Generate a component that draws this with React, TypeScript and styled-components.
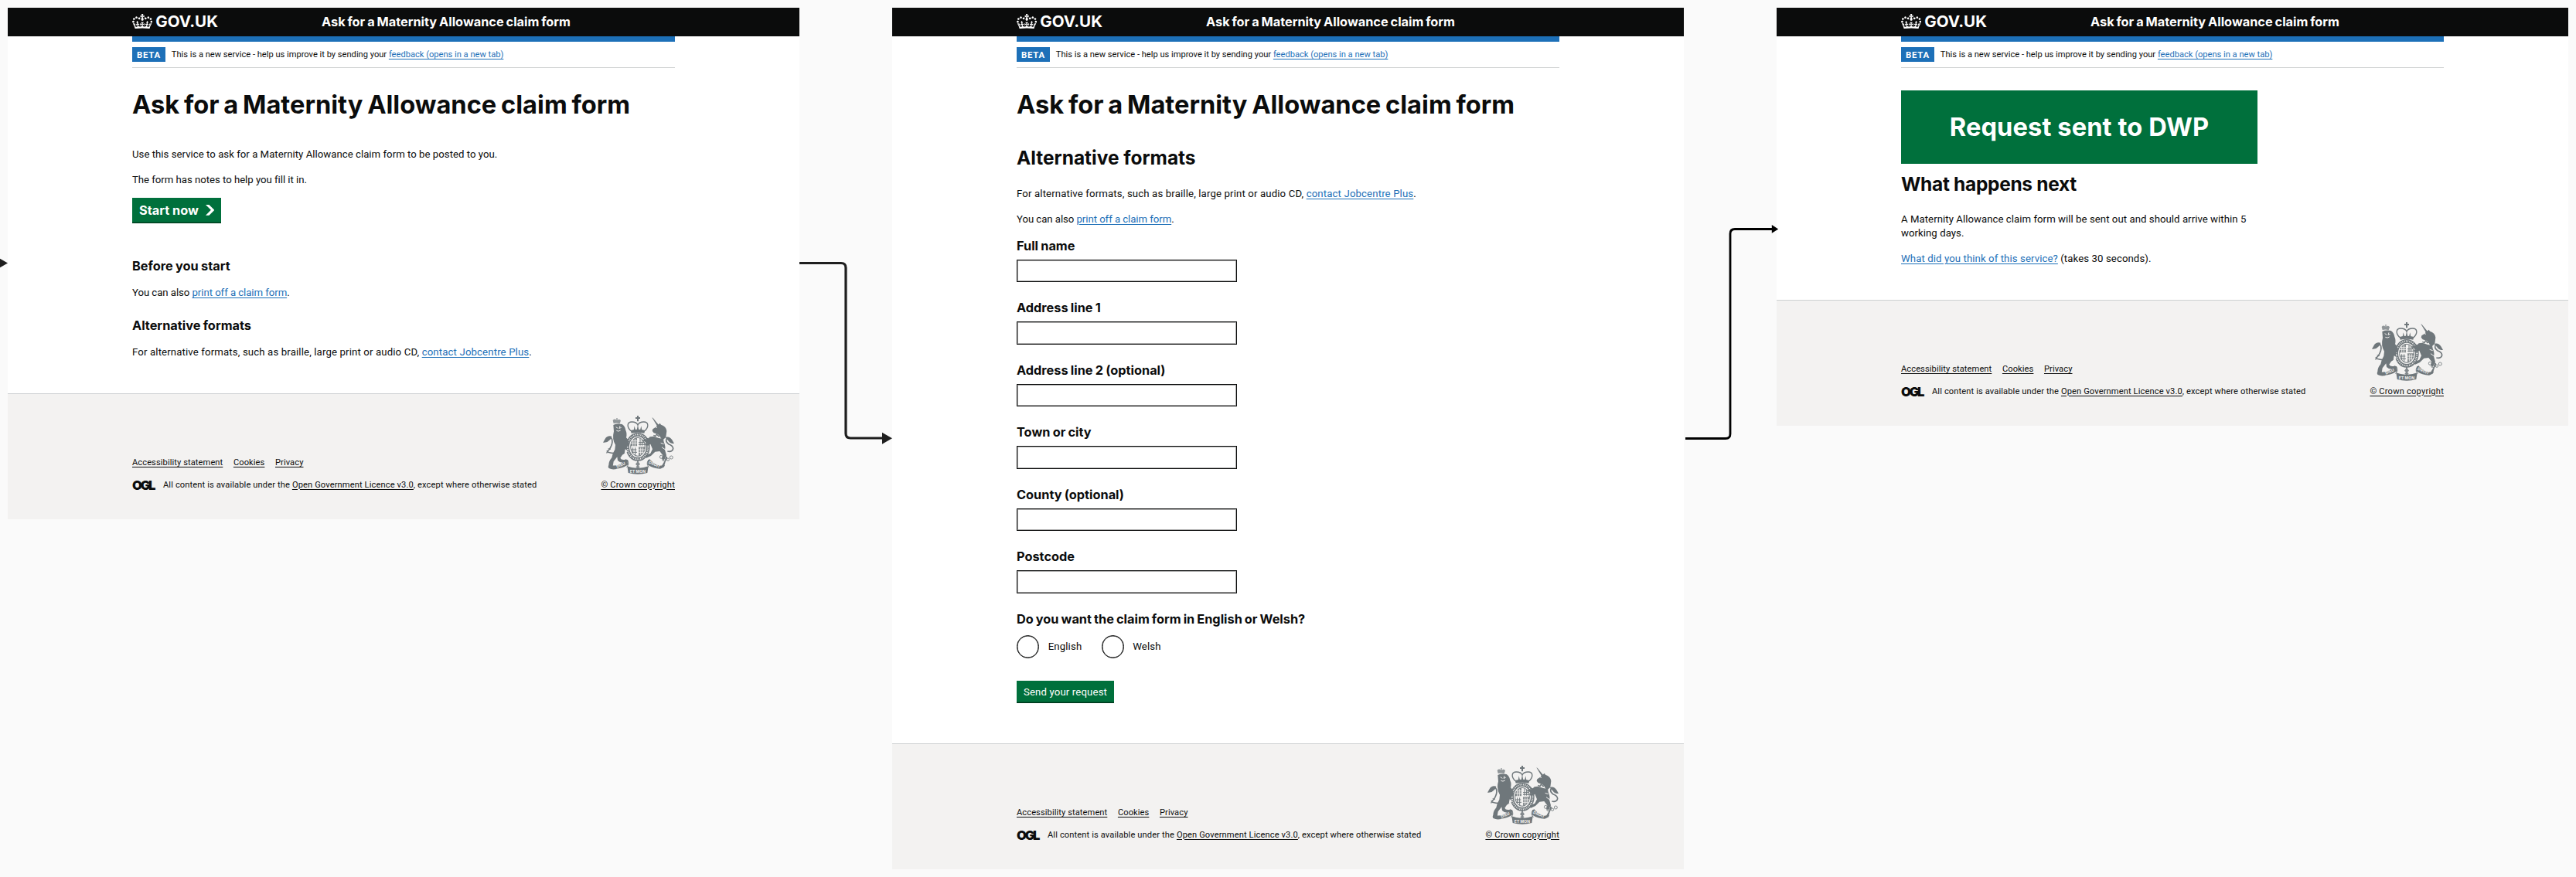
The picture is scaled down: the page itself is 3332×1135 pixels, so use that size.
import React from "react";
import styled, { createGlobalStyle } from "styled-components";

const INK = "#0b0c0c";
const LINK = "#1d70b8";
const GREEN = "#00703c";
const CREST = "#6f777b";
const FOOTER_BG = "#f3f2f1";

const BODY_FONT = `Roboto, "Liberation Sans", Arial, sans-serif`;
const DISPLAY_FONT = `Inter, "Liberation Sans", Arial, sans-serif`;

const GlobalStyle = createGlobalStyle`
  *, *::before, *::after { box-sizing: border-box; }
  body {
    margin: 0;
    background: #fafafa;
    color: ${INK};
    font-family: ${BODY_FONT};
    -webkit-font-smoothing: antialiased;
  }
  h1, h2, h3, p, fieldset, legend { margin: 0; padding: 0; border: 0; font-weight: inherit; }
`;

/* ---------- Board ---------- */

const Board = styled.div`
  position: relative;
  display: flex;
  align-items: flex-start;
  gap: 120px;
  width: 3332px;
  height: 1135px;
  padding: 10px;
  overflow: hidden;
`;

const Connectors = styled.svg`
  position: absolute;
  inset: 0;
  pointer-events: none;
`;

const Screen = styled.section<{ $height: number }>`
  flex: none;
  display: flex;
  flex-direction: column;
  width: 1024px;
  height: ${(p) => p.$height}px;
  background: #fff;
`;

const Container = styled.div`
  width: 702px;
  margin: 0 auto;
`;

/* ---------- Header ---------- */

const HeaderBar = styled.header`
  flex: none;
  background: ${INK};
  height: 36.6px;
`;

const HeaderInner = styled(Container)`
  display: flex;
  align-items: center;
  height: 100%;
  color: #fff;
`;

const Brand = styled.div`
  display: flex;
  align-items: center;
  gap: 4px;
  width: 245px;
  font-family: ${DISPLAY_FONT};
  font-size: 20.6px;
  font-weight: 700;
  line-height: 22px;

  svg {
    margin-top: -2px;
  }
`;

const ServiceName = styled.div`
  font-family: ${DISPLAY_FONT};
  font-size: 16.32px;
  font-weight: 700;
  line-height: 22px;
  word-spacing: -0.06em;
  white-space: nowrap;
`;

const BlueBar = styled(Container)`
  flex: none;
  height: 7.3px;
  background: ${LINK};
`;

const PhaseBanner = styled(Container)`
  flex: none;
  display: flex;
  align-items: center;
  gap: 8px;
  height: 34.1px;
  border-bottom: 1px solid #cfd1d2;
`;

const PhaseTag = styled.strong`
  display: flex;
  align-items: center;
  justify-content: center;
  width: 42.8px;
  height: 18.6px;
  padding-top: 1px;
  background: ${LINK};
  color: #fff;
  font-size: 11.4px;
  font-weight: 700;
  letter-spacing: 0.06em;
  line-height: 18px;
`;

const PhaseText = styled.span`
  padding-top: 1.4px;
  font-size: 11.12px;
  line-height: 14px;
  white-space: nowrap;
`;

const Link = styled.a<{ $dark?: boolean }>`
  color: ${(p) => (p.$dark ? INK : LINK)};
  text-decoration: underline;
  text-decoration-thickness: 1px;
  text-underline-offset: 1.5px;
  cursor: pointer;
`;

/* ---------- Content ---------- */

const Main = styled.main`
  flex: 1;
  width: 702px;
  margin: 0 auto;
`;

const Title = styled.h1`
  padding-top: 28.8px;
  font-family: ${DISPLAY_FONT};
  font-size: 32.64px;
  font-weight: 700;
  line-height: 36.6px;
  word-spacing: -0.06em;
  white-space: nowrap;
`;

const Heading = styled.h2<{ $gap: number; $tracking?: number }>`
  margin-top: ${(p) => p.$gap}px;
  font-family: ${DISPLAY_FONT};
  font-size: 24.46px;
  font-weight: 700;
  line-height: 28px;
  letter-spacing: ${(p) => p.$tracking ?? 0}em;
`;

const Subheading = styled.h3<{ $gap: number }>`
  margin-top: ${(p) => p.$gap}px;
  font-family: ${DISPLAY_FONT};
  font-size: 16.32px;
  font-weight: 700;
  line-height: 22px;
  word-spacing: -0.03em;
`;

const Text = styled.p<{ $gap: number; $wrap?: boolean; $tracking?: number }>`
  margin-top: ${(p) => p.$gap}px;
  margin-bottom: -0.6px;
  padding-top: 0.6px;
  font-size: 13.2px;
  line-height: 18.4px;
  letter-spacing: ${(p) => p.$tracking ?? 0.005}em;
  width: ${(p) => (p.$wrap ? "461px" : "auto")};
  white-space: ${(p) => (p.$wrap ? "normal" : "nowrap")};
`;

const StartButton = styled.button`
  display: flex;
  align-items: center;
  gap: 9px;
  width: 115px;
  height: 32.6px;
  margin: 14.4px 0 0;
  padding: 0 0 1.5px 9px;
  border: 0;
  background: ${GREEN};
  box-shadow: inset 0 -1.5px 0 #00401f;
  color: #fff;
  font: 700 16.32px/22px ${DISPLAY_FONT};
  white-space: nowrap;
`;

const SendButton = styled.button`
  display: flex;
  align-items: center;
  justify-content: center;
  width: 126px;
  height: 29.4px;
  margin: 29.3px 0 0;
  padding: 0;
  border: 0;
  background: ${GREEN};
  box-shadow: inset 0 -1.5px 0 #00381c;
  color: #fff;
  font: 400 13.2px/18px ${BODY_FONT};
  letter-spacing: 0.011em;
  white-space: nowrap;
`;

const Fields = styled.div`
  display: grid;
  grid-auto-rows: 80.5px;
  margin-top: 13.6px;
`;

const Field = styled.label`
  display: flex;
  flex-direction: column;
  gap: 7.4px;
  font-family: ${DISPLAY_FONT};
  font-size: 16.32px;
  font-weight: 700;
  line-height: 22px;
  word-spacing: -0.04em;
`;

const Input = styled.input`
  width: 284.5px;
  height: 29.3px;
  margin: 0;
  padding: 0 4px;
  border: 1px solid ${INK};
  border-radius: 0;
  box-shadow: inset 0 0 0 1px rgba(11, 12, 12, 0.35);
  background: #fff;
  font: inherit;
`;

const Question = styled.legend`
  font-family: ${DISPLAY_FONT};
  font-size: 16.32px;
  font-weight: 700;
  line-height: 22px;
  word-spacing: -0.05em;
  white-space: nowrap;
`;

const Radios = styled.div`
  display: flex;
  margin-top: 10.9px;
`;

const RadioLabel = styled.label`
  display: flex;
  align-items: center;
  gap: 11.4px;
  width: 109.5px;
  font-size: 13.2px;
  line-height: 19.6px;
  letter-spacing: 0.01em;
`;

const RadioCircle = styled.span`
  flex: none;
  width: 29.3px;
  height: 29.3px;
  border: 1px solid ${INK};
  border-radius: 50%;
  box-shadow: inset 0 0 0 0.5px ${INK};
`;

const Confirmation = styled.div`
  display: flex;
  align-items: center;
  justify-content: center;
  width: 461px;
  height: 95px;
  margin-top: 28.7px;
  background: ${GREEN};
  color: #fff;
  font-family: ${DISPLAY_FONT};
  font-size: 32.64px;
  font-weight: 700;
  line-height: 36.6px;
  letter-spacing: 0.003em;
  white-space: nowrap;
`;

/* ---------- Footer ---------- */

const FooterBar = styled.footer`
  flex: none;
  height: 163.5px;
  border-top: 1px solid #cdd0d2;
  background: ${FOOTER_BG};
  font-size: 11.12px;
  line-height: 14px;
`;

const FooterInner = styled(Container)`
  display: flex;
  align-items: flex-end;
  justify-content: space-between;
  height: 125px;
`;

const FooterMeta = styled.div`
  display: flex;
  flex-direction: column;
  gap: 14.3px;
`;

const FooterLinks = styled.nav`
  display: flex;
  gap: 13.6px;
  letter-spacing: 0.008em;
`;

const Licence = styled.div`
  display: flex;
  align-items: center;
  gap: 10px;
  height: 14px;
  white-space: nowrap;
  letter-spacing: 0.011em;
`;

const Ogl = styled.span`
  width: 30px;
  color: ${INK};
  font-family: ${DISPLAY_FONT};
  font-size: 16.6px;
  font-weight: 900;
  letter-spacing: -0.13em;
  line-height: 14px;
`;

const Copyright = styled.div`
  display: flex;
  flex-direction: column;
  align-items: flex-end;
  gap: 6.6px;
  white-space: nowrap;
  letter-spacing: 0.019em;

  svg {
    margin-right: 1px;
  }
`;

/* ---------- Drawings ---------- */

const Crown = () => (
  <svg width="26.3" height="19.3" viewBox="0 0 132 97" fill="currentColor" aria-hidden="true">
    <path d="M25 30.2c3.5 1.5 7.7-.2 9.1-3.7 1.5-3.6-.2-7.8-3.9-9.2-3.6-1.4-7.6.3-9.1 3.9-1.4 3.5.3 7.5 3.9 9zM9 39.5c3.6 1.5 7.8-.2 9.2-3.7 1.5-3.6-.2-7.8-3.9-9.1-3.6-1.5-7.6.2-9.1 3.8-1.4 3.5.3 7.5 3.8 9zM4.4 57.2c3.5 1.5 7.7-.2 9.1-3.8 1.5-3.6-.2-7.7-3.9-9.1-3.5-1.5-7.6.3-9.1 3.8-1.4 3.5.3 7.6 3.9 9.1zm38.3-21.4c3.5 1.5 7.7-.2 9.1-3.8 1.5-3.6-.2-7.7-3.9-9.1-3.6-1.5-7.6.3-9.1 3.8-1.3 3.6.4 7.7 3.9 9.1zm64.4-5.6c-3.6 1.5-7.8-.2-9.1-3.7-1.5-3.6.2-7.8 3.8-9.2 3.6-1.4 7.7.3 9.2 3.9 1.3 3.5-.4 7.5-3.9 9zm15.9 9.3c-3.6 1.5-7.7-.2-9.1-3.7-1.5-3.6.2-7.8 3.7-9.1 3.6-1.5 7.7.2 9.2 3.8 1.5 3.5-.3 7.5-3.8 9zm4.7 17.7c-3.6 1.5-7.8-.2-9.2-3.8-1.5-3.6.2-7.7 3.9-9.1 3.6-1.5 7.7.3 9.2 3.8 1.3 3.5-.4 7.6-3.9 9.1zM89.3 35.8c-3.6 1.5-7.8-.2-9.2-3.8-1.4-3.6.2-7.7 3.9-9.1 3.6-1.5 7.7.3 9.2 3.8 1.4 3.6-.3 7.7-3.9 9.1zM69.7 17.7l8.9 4.7V9.3l-8.9 2.8c-.2-.3-.5-.6-.9-.9L72.4 0H59.6l3.5 11.2c-.3.3-.6.5-.9.9l-8.8-2.8v13.1l8.8-4.7c.3.3.6.7.9.9l-5 15.4v.1c-.2.8-.4 1.6-.4 2.4 0 4.1 3.1 7.5 7 8.1h.2c.3 0 .7.1 1 .1.4 0 .7 0 1-.1h.2c4-.6 7.1-4.1 7.1-8.1 0-.8-.1-1.7-.4-2.4V34l-5.1-15.4c.4-.2.7-.6 1-.9zM66 92.8c16.9 0 32.8 1.1 47.1 3.2 4-16.9 8.9-26.7 14-33.5l-9.6-3.4c1 4.9 1.1 7.2 0 10.2-1.5-1.4-3-4.3-4.2-8.7L108.6 76c2.8-2 5-3.2 7.5-3.3-4.4 9.4-10 11.9-13.6 11.2-4.3-.8-6.3-4.6-5.6-7.9 1-4.7 5.7-5.9 8-.5 4.3-8.7-3-11.4-7.6-8.8 7.1-7.2 7.9-13.5 2.1-21.1-8 6.1-8.1 12.3-4.5 20.8-4.7-5.4-12.1-2.5-9.5 6.2 3.4-5.2 7.9-2 7.2 3.1-.6 4.3-6.4 7.8-13.5 7.2-10.3-.9-10.9-8-11.2-13.8 2.5-.5 7.1 1.8 11 7.3L80.2 60c-4.1 4.4-8 5.3-12.3 5.4 1.4-4.4 8-11.6 8-11.6H55.5s6.4 7.2 7.9 11.6c-4.2-.1-8-1-12.3-5.4l1.4 16.4c3.9-5.5 8.5-7.7 10.9-7.3-.3 5.8-.9 12.8-11.1 13.8-7.2.6-12.9-2.9-13.5-7.2-.7-5 3.8-8.3 7.1-3.1 2.7-8.7-4.6-11.6-9.4-6.2 3.7-8.5 3.6-14.7-4.6-20.8-5.8 7.6-5 13.9 2.2 21.1-4.7-2.6-11.9.1-7.7 8.8 2.3-5.5 7.1-4.2 8.1.5.7 3.3-1.3 7.1-5.7 7.9-3.5.7-9-1.8-13.5-11.2 2.5.1 4.7 1.3 7.5 3.3l-4.7-15.4c-1.2 4.4-2.7 7.2-4.3 8.7-1.1-3-.9-5.3 0-10.2l-9.5 3.4c5 6.9 9.9 16.7 14 33.5 14.8-2.1 30.8-3.2 47.7-3.2z" />
  </svg>
);

const Crest = () => (
  <svg width="92" height="76" viewBox="0 0 276 228" fill={CREST} aria-hidden="true">
    {/* royal crown */}
    <path d="M132 0h6v6h6v6h-6v10h-6V12h-6V6h6z" />
    <g fill="none" stroke={CREST} strokeWidth="4">
      <path d="M108 59C92 44 92 24 112 24c12 0 20 5 23 12 3-7 11-12 23-12 20 0 20 20 4 35" />
    </g>
    <path d="M119 56l3-16 4 16zM131 56l4-22 4 22zM144 56l4-16 3 16z" />
    <path d="M107 57q28-7 56 0l-3 11q-25-5-50 0z" />
    {/* garter and shield */}
    <ellipse cx="135" cy="121" rx="40" ry="48" fill="none" stroke={CREST} strokeWidth="14" />
    <ellipse cx="135" cy="121" rx="40" ry="48" fill="none" stroke={FOOTER_BG} strokeWidth="6" strokeDasharray="3 4" />
    <ellipse cx="135" cy="121" rx="28" ry="36" fill="none" stroke={CREST} strokeWidth="3" />
    <path d="M110 100q10-14 22-14v32h-25zM138 121h26q-3 30-26 35z" opacity="0.8" />
    <path d="M116 94v24M124 90v28M108 106h24M110 98h22M146 124v28M154 124v22M138 132h24M138 142h20" stroke={FOOTER_BG} strokeWidth="2.5" />
    <path d="M144 88v28M152 92v24M138 104h24M138 112h26M116 124v22M125 124v30M108 132h22M112 142h20" fill="none" stroke={CREST} strokeWidth="3" />
    {/* lion crown */}
    <path d="M41 30l-3-12q7-8 14-1V9h4v8q8-7 13 2l-4 12q-12-5-24-1z" opacity="0.75" />
    {/* lion */}
    <path d="M40 36q14-7 34-3 12 8 14 24 6 12 2 28 8 6 10 18l2 12-9 3-2 24-16 10-8 12q4 10 20 6l12 4-6 5q-24 8-36-5l-2-14-14 18-3 18 12 6 3 5q-18 4-30-3-5-4-1-13 0-14 12-28 2-16 12-32l2-18q-14-22-6-52z" />
    <path d="M50 44l8 5M66 40l-3 9 8-3M52 58q8 5 16-1" stroke={FOOTER_BG} strokeWidth="3" fill="none" />
    <path d="M86 130q8 3 9 10l-12 8z" fill={FOOTER_BG} />
    {/* lion tail */}
    <path d="M44 146q-26-2-28-8 10-4 18-26 6-26-8-28" fill="none" stroke={CREST} strokeWidth="5" />
    <path d="M34 80q-18-4-26 10l-8 14q16 2 24-8 8-6 10-16z" />
    <path d="M24 142l-12 2M30 130l-10-2" stroke={CREST} strokeWidth="3" />
    {/* unicorn */}
    <path d="M190 7l4 2 24 29-7 4z" />
    <path d="M216 34l5-5 4 6q20 6 22 24l-3 24-14 14-9-18-10-8-14-4-6-8 2-7 12-8q4-8 11-10z" />
    <path d="M204 44l6 2" stroke={FOOTER_BG} strokeWidth="3" />
    <path d="M196 76l8 4 4-8 8 8 6-4 4 10 8 0" fill="none" stroke={CREST} strokeWidth="4" />
    <path d="M182 82l14-2q20 8 38 10l2 12q8 18 4 30l6 22-10 20-8-8 4-12-12-16-18 2-16 16-18 8-6-4 8-8 14-6 8-16-8-20-16 8-6-10 14-4-18-4-4-6 16-2-6-8 12 4z" />
    <path d="M244 156l-4 18-12 20 8 6 6-20 8-18z" />
    <path d="M242 132l-14-10M236 110l-12-4" stroke={FOOTER_BG} strokeWidth="3" />
    {/* unicorn tail */}
    <path d="M250 138q20 4 22-10 0-12-18-18-16-12-4-26" fill="none" stroke={CREST} strokeWidth="5" />
    <path d="M242 84q16-6 26 10l8 14q-16 0-22-10-6-6-12-14z" />
    {/* chain */}
    <g fill="none" stroke={CREST} strokeWidth="2.5">
      <circle cx="226" cy="160" r="6" />
      <circle cx="236" cy="170" r="6" />
      <circle cx="252" cy="170" r="5" />
      <circle cx="265" cy="162" r="6" />
    </g>
    {/* thistle and rose */}
    <path d="M132 174h6v6l6 8-6 6 5 6-8 6-8-6 5-6-6-6 6-8z" opacity="0.85" />
    {/* motto ribbons */}
    <path d="M30 192q30 8 58-22l8 2q-2 12 2 18-24 16-50 16-16-4-18-14z" />
    <path d="M240 192q-30 8-58-22l-8 2q2 12-2 18 24 16 50 16 16-4 18-14z" />
    <path d="M94 196q40 16 82 0l-4 26q-37 10-74 0z" />
    <path d="M88 170q12 4 10 20l-6 10M182 170q-12 4-10 20l6 10" fill="none" stroke={CREST} strokeWidth="3" />
    <g fill={FOOTER_BG} fontFamily="Inter, sans-serif" fontWeight="700" textAnchor="middle">
      <text transform="translate(71 196) rotate(-24)" fontSize="15">DIEU</text>
      <text x="135" y="221" fontSize="15">ET MON</text>
      <text transform="translate(198 194) rotate(24)" fontSize="15">DROIT</text>
    </g>
  </svg>
);

const Chevron = () => (
  <svg width="11.3" height="13.7" viewBox="0 0 33 40" fill="currentColor" aria-hidden="true">
    <path d="M0 0h13l20 20-20 20H0l20-20z" />
  </svg>
);

/* ---------- Shared parts ---------- */

const SERVICE = "Ask for a Maternity Allowance claim form";

const Header = () => (
  <>
    <HeaderBar>
      <HeaderInner>
        <Brand>
          <Crown />
          GOV.UK
        </Brand>
        <ServiceName>{SERVICE}</ServiceName>
      </HeaderInner>
    </HeaderBar>
    <BlueBar />
    <PhaseBanner>
      <PhaseTag>BETA</PhaseTag>
      <PhaseText>
        This is a new service - help us improve it by sending your <Link>feedback (opens in a new tab)</Link>
      </PhaseText>
    </PhaseBanner>
  </>
);

const Footer = () => (
  <FooterBar>
    <FooterInner>
      <FooterMeta>
        <FooterLinks>
          <Link $dark>Accessibility statement</Link>
          <Link $dark>Cookies</Link>
          <Link $dark>Privacy</Link>
        </FooterLinks>
        <Licence>
          <Ogl>OGL</Ogl>
          <span>
            All content is available under the <Link $dark>Open Government Licence v3.0</Link>, except where otherwise
            stated
          </span>
        </Licence>
      </FooterMeta>
      <Copyright>
        <Crest />
        <Link $dark>© Crown copyright</Link>
      </Copyright>
    </FooterInner>
  </FooterBar>
);

const FIELDS = [
  "Full name",
  "Address line 1",
  "Address line 2 (optional)",
  "Town or city",
  "County (optional)",
  "Postcode",
];

/* ---------- Screens ---------- */

const StartScreen = () => (
  <Screen $height={662}>
    <Header />
    <Main>
      <Title>{SERVICE}</Title>
      <Text $gap={37} $tracking={0.002}>
        Use this service to ask for a Maternity Allowance claim form to be posted to you.
      </Text>
      <Text $gap={14.6} $tracking={-0.002}>
        The form has notes to help you fill it in.
      </Text>
      <StartButton>
        Start now
        <Chevron />
      </StartButton>
      <Subheading $gap={44}>Before you start</Subheading>
      <Text $gap={15} $tracking={-0.004}>
        You can also <Link>print off a claim form</Link>.
      </Text>
      <Subheading $gap={21.6}>Alternative formats</Subheading>
      <Text $gap={15} $tracking={0.0105}>
        For alternative formats, such as braille, large print or audio CD, <Link>contact Jobcentre Plus</Link>.
      </Text>
    </Main>
    <Footer />
  </Screen>
);

const FormScreen = () => (
  <Screen $height={1115}>
    <Header />
    <Main>
      <Title>{SERVICE}</Title>
      <Heading $gap={36.8}>Alternative formats</Heading>
      <Text $gap={23.4} $tracking={0.0105}>
        For alternative formats, such as braille, large print or audio CD, <Link>contact Jobcentre Plus</Link>.
      </Text>
      <Text $gap={14.6} $tracking={-0.004}>
        You can also <Link>print off a claim form</Link>.
      </Text>
      <Fields>
        {FIELDS.map((name) => (
          <Field key={name}>
            {name}
            <Input type="text" />
          </Field>
        ))}
      </Fields>
      <fieldset>
        <Question>Do you want the claim form in English or Welsh?</Question>
        <Radios>
          {["English", "Welsh"].map((language) => (
            <RadioLabel key={language}>
              <RadioCircle />
              {language}
            </RadioLabel>
          ))}
        </Radios>
      </fieldset>
      <SendButton>Send your request</SendButton>
    </Main>
    <Footer />
  </Screen>
);

const ConfirmationScreen = () => (
  <Screen $height={541}>
    <Header />
    <Main>
      <Confirmation>Request sent to DWP</Confirmation>
      <Heading $gap={11.9} $tracking={-0.012}>
        What happens next
      </Heading>
      <Text $gap={22.6} $wrap $tracking={0.0037}>
        A Maternity Allowance claim form will be sent out and should arrive within 5 working days.
      </Text>
      <Text $gap={14.6} $tracking={0.007}>
        <Link>What did you think of this service?</Link> (takes 30 seconds).
      </Text>
    </Main>
    <Footer />
  </Screen>
);

const App: React.FC = () => (
  <>
    <GlobalStyle />
    <Board>
      <StartScreen />
      <FormScreen />
      <ConfirmationScreen />
      <Connectors width="3332" height="1135" viewBox="0 0 3332 1135" aria-hidden="true">
        <path d="M-3 333l13 7.5-13 7.5z" fill="#1e1e1e" />
        <path d="M1034 340.5h54q6 0 6 6V561q0 6 6 6h42" fill="none" stroke="#1e1e1e" strokeWidth="3.2" />
        <path d="M1141 559.7l13 7.5-13 7.5z" fill="#1e1e1e" />
        <path d="M2180 567.5h52q6 0 6-6V302.5q0-6 6-6h49" fill="none" stroke="#000" strokeWidth="2.8" />
        <path d="M2291.8 291l8.4 5.4-8.4 5.4z" fill="#000" />
      </Connectors>
    </Board>
  </>
);

export default App;
